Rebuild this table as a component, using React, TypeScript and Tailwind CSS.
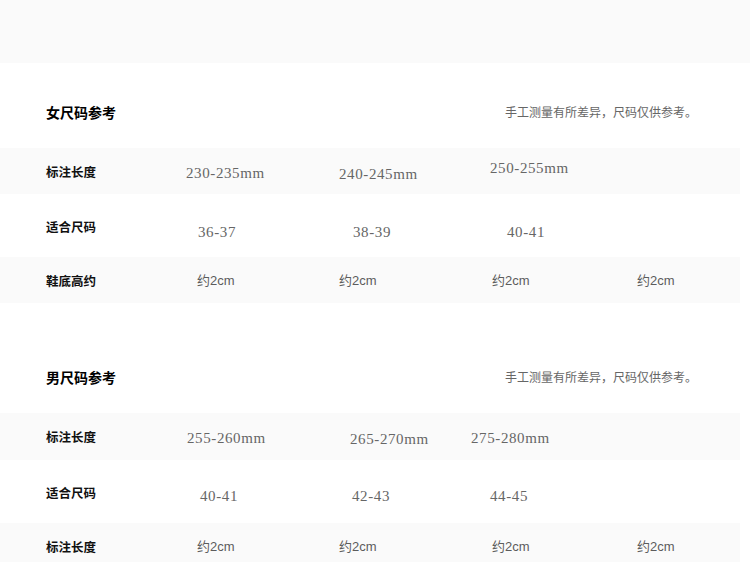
import React from 'react';

type Cell = { text: string; cls: string; kind: 'label' | 'num' | 'cm' };
type Row = { band: boolean; h: string; cells: Cell[] };

const serif = { fontFamily: '"Liberation Serif", "Noto Sans CJK SC", serif' };

const womenRows: Row[] = [
  {
    band: true,
    h: 'h-[46px]',
    cells: [
      { text: '标注长度', kind: 'label', cls: 'w-[140px] pt-[17px]' },
      { text: '230-235mm', kind: 'num', cls: 'w-[153px] pt-[15px]' },
      { text: '240-245mm', kind: 'num', cls: 'w-[151px] pt-[16px]' },
      { text: '250-255mm', kind: 'num', cls: 'pt-[10px]' },
    ],
  },
  {
    band: false,
    h: 'h-[63px]',
    cells: [
      { text: '适合尺码', kind: 'label', cls: 'w-[152px] pt-[26px]' },
      { text: '36-37', kind: 'num', cls: 'w-[155px] pt-[28px]' },
      { text: '38-39', kind: 'num', cls: 'w-[154px] pt-[28px]' },
      { text: '40-41', kind: 'num', cls: 'pt-[28px]' },
    ],
  },
  {
    band: true,
    h: 'h-[46px]',
    cells: [
      { text: '鞋底高约', kind: 'label', cls: 'w-[151px] pt-[17px]' },
      { text: '约2cm', kind: 'cm', cls: 'w-[142px] pt-[15px]' },
      { text: '约2cm', kind: 'cm', cls: 'w-[153px] pt-[15px]' },
      { text: '约2cm', kind: 'cm', cls: 'w-[145px] pt-[15px]' },
      { text: '约2cm', kind: 'cm', cls: 'pt-[15px]' },
    ],
  },
];

const menRows: Row[] = [
  {
    band: true,
    h: 'h-[47px]',
    cells: [
      { text: '标注长度', kind: 'label', cls: 'w-[141px] pt-[17px]' },
      { text: '255-260mm', kind: 'num', cls: 'w-[163px] pt-[15px]' },
      { text: '265-270mm', kind: 'num', cls: 'w-[121px] pt-[16px]' },
      { text: '275-280mm', kind: 'num', cls: 'pt-[15px]' },
    ],
  },
  {
    band: false,
    h: 'h-[63px]',
    cells: [
      { text: '适合尺码', kind: 'label', cls: 'w-[154px] pt-[26px]' },
      { text: '40-41', kind: 'num', cls: 'w-[152px] pt-[26px]' },
      { text: '42-43', kind: 'num', cls: 'w-[138px] pt-[26px]' },
      { text: '44-45', kind: 'num', cls: 'pt-[26px]' },
    ],
  },
  {
    band: true,
    h: 'h-[46px]',
    cells: [
      { text: '标注长度', kind: 'label', cls: 'w-[151px] pt-[17px]' },
      { text: '约2cm', kind: 'cm', cls: 'w-[142px] pt-[15px]' },
      { text: '约2cm', kind: 'cm', cls: 'w-[153px] pt-[15px]' },
      { text: '约2cm', kind: 'cm', cls: 'w-[145px] pt-[15px]' },
      { text: '约2cm', kind: 'cm', cls: 'pt-[15px]' },
    ],
  },
];

function SizeCell({ cell }: { cell: Cell }) {
  if (cell.kind === 'label') {
    return (
      <div className={`${cell.cls} shrink-0`}>
        <span className="block text-[12.5px] leading-[16px] font-bold text-[#111]">{cell.text}</span>
      </div>
    );
  }
  if (cell.kind === 'num') {
    return (
      <div className={`${cell.cls} shrink-0`}>
        <span style={serif} className="block text-[15px] leading-[20px] tracking-[0.6px] text-[#666]">
          {cell.text}
        </span>
      </div>
    );
  }
  return (
    <div className={`${cell.cls} shrink-0`}>
      <span className="block text-[13px] leading-[18px] text-[#5c5c5c]">{cell.text}</span>
    </div>
  );
}

function SizeTable({ title, rows, head }: { title: string; rows: Row[]; head: string }) {
  return (
    <section>
      <div className={`${head} flex items-end justify-between pl-[46px] pr-[53px] pb-[26px]`}>
        <h2 className="text-[14px] leading-[18px] font-bold text-black">{title}</h2>
        <p className="text-[12px] leading-[16px] text-[#666] pb-[1px]">手工测量有所差异，尺码仅供参考。</p>
      </div>
      {rows.map((row, i) => (
        <div
          key={i}
          className={`${row.h} w-[740px] flex items-start pl-[46px] ${row.band ? 'bg-[#fafafa]' : 'bg-white'}`}
        >
          {row.cells.map((c, j) => (
            <SizeCell key={j} cell={c} />
          ))}
        </div>
      ))}
    </section>
  );
}

export default function App() {
  return (
    <div
      className="w-[750px] h-[562px] overflow-hidden bg-white"
      style={{ fontFamily: '"Liberation Sans", "Noto Sans CJK SC", sans-serif' }}
    >
      <div className="h-[63px] bg-[#fafafa]" />
      <SizeTable title="女尺码参考" rows={womenRows} head="h-[85px]" />
      <SizeTable title="男尺码参考" rows={menRows} head="h-[110px]" />
    </div>
  );
}
